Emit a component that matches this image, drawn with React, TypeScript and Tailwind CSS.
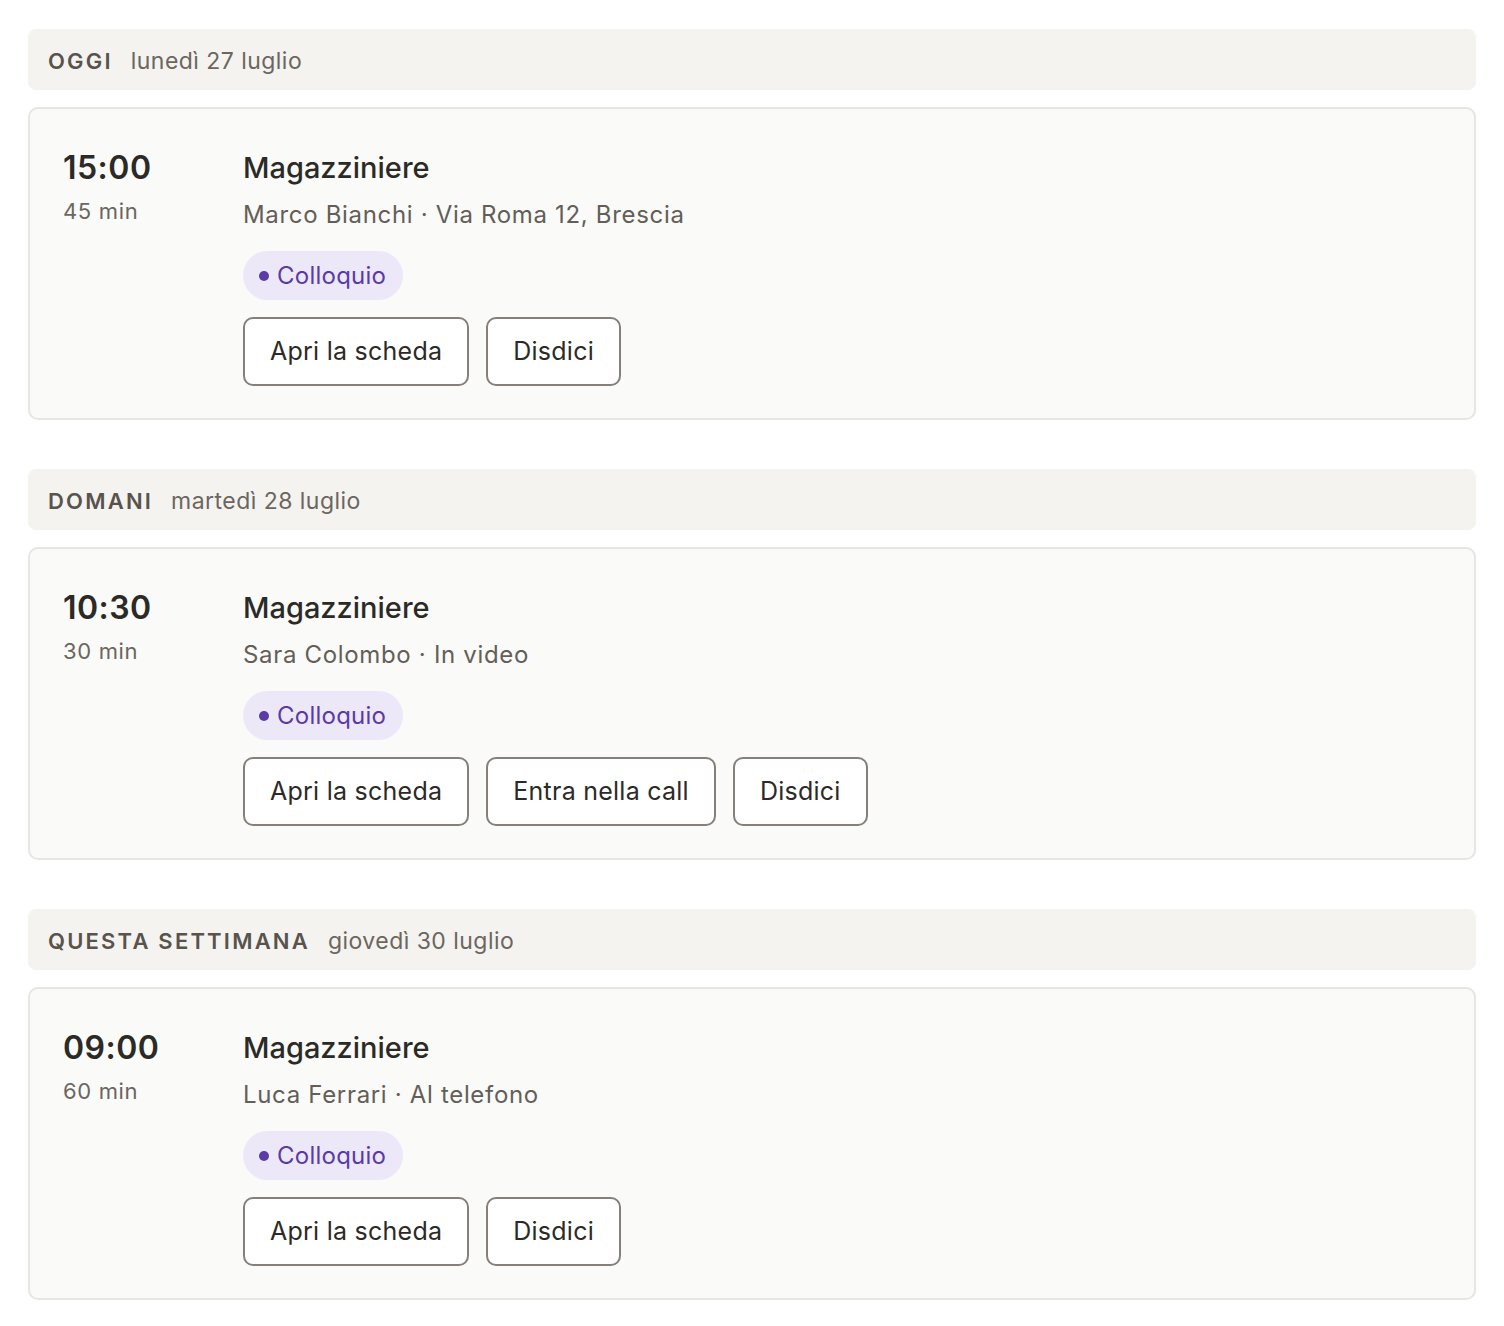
import React from "react";

interface IAppointment {
  time: string;
  duration: string;
  title: string;
  who: string;
  where: string;
  actions: string[];
}

interface IDay {
  label: string;
  date: string;
  items: IAppointment[];
}

const days: IDay[] = [
  {
    label: "Oggi",
    date: "lunedì 27 luglio",
    items: [
      {
        time: "15:00",
        duration: "45 min",
        title: "Magazziniere",
        who: "Marco Bianchi",
        where: "Via Roma 12, Brescia",
        actions: ["Apri la scheda", "Disdici"],
      },
    ],
  },
  {
    label: "Domani",
    date: "martedì 28 luglio",
    items: [
      {
        time: "10:30",
        duration: "30 min",
        title: "Magazziniere",
        who: "Sara Colombo",
        where: "In video",
        actions: ["Apri la scheda", "Entra nella call", "Disdici"],
      },
    ],
  },
  {
    label: "Questa settimana",
    date: "giovedì 30 luglio",
    items: [
      {
        time: "09:00",
        duration: "60 min",
        title: "Magazziniere",
        who: "Luca Ferrari",
        where: "Al telefono",
        actions: ["Apri la scheda", "Disdici"],
      },
    ],
  },
];

const AppointmentCard: React.FC<{ item: IAppointment }> = ({ item }) => {
  return (
    <div className="flex rounded-[10px] border-2 border-[#e8e6e2] bg-[#fafaf8] px-[33px] pt-[40px] pb-[32px]">
      <div className="w-[180px] shrink-0">
        <div className="text-[32px] font-semibold leading-[38px] tracking-[0.015em] text-[#2c2a27]">
          {item.time}
        </div>
        <div className="mt-[9px] text-[22px] leading-[30px] tracking-[0.03em] text-[#6b6660]">
          {item.duration}
        </div>
      </div>
      <div className="flex flex-col items-start">
        <div className="text-[29px] font-medium leading-[38px] text-[#2c2a27]">
          {item.title}
        </div>
        <div className="mt-[13px] text-[24px] leading-[30px] tracking-[0.028em] text-[#635e58]">
          {item.who} · {item.where}
        </div>
        <div className="mt-[21px] flex h-[49px] items-center gap-[8px] rounded-full bg-[#ede8f8] pl-[16px] pr-[17px] text-[24px] tracking-[0.01em] text-[#5a3aa6]">
          <span className="h-[10px] w-[10px] rounded-full bg-[#5a3aa6]" />
          Colloquio
        </div>
        <div className="mt-[17px] flex gap-[17px]">
          {item.actions.map((a) => (
            <button
              key={a}
              className="h-[69px] rounded-[10px] border-2 border-[#85807a] bg-white px-[25px] text-[25px] tracking-[0.01em] text-[#2c2a27]"
            >
              {a}
            </button>
          ))}
        </div>
      </div>
    </div>
  );
};

const App: React.FC = () => {
  return (
    <div
      className="min-h-screen bg-white px-[28px] pt-[29px] pb-[24px]"
      style={{ fontFamily: "Inter, 'Noto Sans', sans-serif" }}
    >
      <div className="flex flex-col gap-[49px]">
        {days.map((day) => (
          <section key={day.label} className="flex flex-col gap-[17px]">
            <div className="flex h-[61px] items-center gap-[18px] rounded-[8px] bg-[#f4f3ef] px-[20px] pt-[3px]">
              <span className="text-[22px] font-semibold uppercase tracking-[0.1em] text-[#58534d]">
                {day.label}
              </span>
              <span className="text-[23px] tracking-[0.02em] text-[#6b6660]">
                {day.date}
              </span>
            </div>
            {day.items.map((item) => (
              <AppointmentCard key={item.time} item={item} />
            ))}
          </section>
        ))}
      </div>
    </div>
  );
};

export default App;
